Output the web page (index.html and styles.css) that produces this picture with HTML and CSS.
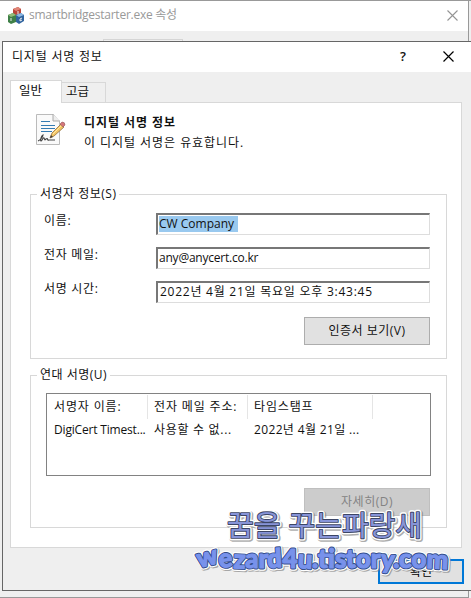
FILE: index.html
```html
<!DOCTYPE html>
<html lang="ko">
<head>
<meta charset="utf-8">
<title>디지털 서명 정보</title>
<link rel="stylesheet" href="styles.css">
</head>
<body>
<div class="desktop">
  <header class="parent-title">
    <svg class="app-icon" width="17" height="18" viewBox="0 0 17 18">
      <path d="M5 2l5-2 3 2v6l-5 2-3-2z" fill="#b8453a"/><path d="M5 2l5-2 3 2-5 2z" fill="#e08577"/>
      <path d="M0 8l5-2 3 2v7l-5 2-3-2z" fill="#3f8047"/><path d="M0 8l5-2 3 2-5 2z" fill="#94bd7c"/>
      <path d="M8 8l5-2 3 2v6l-5 3-3-2z" fill="#31649f"/><path d="M8 8l5-2 3 2-5 2z" fill="#8db7e2"/>
      <path d="M14 11l-2 1v2l2-1M10 4v3M3 11v3" fill="none" stroke="#eee"/>
    </svg>
    <span class="parent-name">smartbridgestarter.exe 속성</span>
    <svg class="parent-close" width="11" height="11" viewBox="0 0 11 11"><path d="M.5.5l10 10M10.5.5l-10 10" fill="none" stroke="#949494" stroke-width="1.1"/></svg>
  </header>
  <div class="parent-strip"><div class="parent-tab"></div></div>

  <main class="dialog">
    <header class="dialog-title">
      <span class="dialog-name">디지털 서명 정보</span>
      <span class="help">?</span>
      <svg class="close" width="11" height="11" viewBox="0 0 11 11"><path d="M.5.5l10 10M10.5.5l-10 10" fill="none" stroke="#000" stroke-width="1.2"/></svg>
    </header>
    <div class="tabs"><div class="tab active"><span>일반</span></div><div class="tab"><span>고급</span></div></div>
    <section class="panel">
      <div class="intro">
        <svg width="31" height="33" viewBox="0 0 31 33">
          <path d="M1.5 1.5h17l6 7v23h-23z" fill="#fafafa" stroke="#bbb"/>
          <path d="M18 1v7h7" fill="#eee" stroke="#aaa"/>
          <path d="M6 8.5h9M6 12.5h14M6 15.5h14M6 18.5h11" stroke="#347bb2" stroke-width="1.2"/>
          <path d="M3 28c3-1 5-5 5-6-2 1-3 6-2 6s2-4 3-3 0 3 2 1c2-2 1 2 3 1h6" fill="none" stroke="#444" stroke-width="1.1"/>
          <path d="M15 25l2-5 9-9 3 3-10 9z" fill="#f4c565" stroke="#8f7041" stroke-width=".8"/>
          <path d="M18 21l9-9" stroke="#ffe9a5"/>
          <path d="M25 11l2-2q3 0 3 3l-2 2z" fill="#d4777b" stroke="#95595d" stroke-width=".6"/>
          <path d="M15 25l1-3 2 2z" fill="#443d35"/>
        </svg>
        <div><h1>디지털 서명 정보</h1><p>이 디지털 서명은 유효합니다.</p></div>
      </div>

      <fieldset class="signer">
        <legend class="l-signer">서명자 정보(S)</legend>
        <div class="fields">
          <label>이름:</label><div class="field"><span class="selected">CW Company</span></div>
          <label>전자 메일:</label><div class="field"><span class="mail">any@anycert.co.kr</span></div>
          <label>서명 시간:</label><div class="field"><span class="time">2022년 4월 21일 목요일 오후 3:43:45</span></div>
        </div>
        <div class="button"><span class="b-view">인증서 보기(V)</span></div>
      </fieldset>

      <fieldset class="counter">
        <legend class="l-counter">연대 서명(U)</legend>
        <div class="list">
          <div class="col"><b>서명자 이름:</b><span class="c-digi">DigiCert Timest...</span></div>
          <div class="col"><b>전자 메일 주소:</b><span class="c-na">사용할 수 없...</span></div>
          <div class="col"><b>타임스탬프</b><span class="c-date">2022년 4월 21일 ...</span></div>
        </div>
        <div class="button disabled"><span class="b-detail">자세히(D)</span></div>
      </fieldset>
    </section>
    <div class="footer"><div class="ok"><span>확인</span></div></div>
  </main>
  <div class="parent-bottom"></div>
</div>

<svg class="watermark" width="270" height="80" viewBox="190 505 270 80">
  <defs>
    <text id="wm-name" class="wm-name" x="227" y="536" textLength="195" lengthAdjust="spacingAndGlyphs">꿈을 꾸는파랑새</text>
    <text id="wm-url" class="wm-url" x="199" y="568" textLength="249" lengthAdjust="spacingAndGlyphs" rotate="-14 -7 3 0 0 -4 0 3 0 0 3 0 -3 0 0 4 0 -3 0 3">wezard4u.tistory.com</text>
  </defs>
  <g class="shadow"><use href="#wm-name" x="1" y="1"/><use href="#wm-url" x="1" y="1"/></g>
  <g class="halo"><use href="#wm-name"/></g>
  <g class="url-halo"><use href="#wm-url"/></g>
  <g class="outline"><use href="#wm-name"/></g>
  <g class="fill"><use href="#wm-name"/></g>
  <g class="url-outline"><use href="#wm-url"/></g>
  <g class="url-fill"><use href="#wm-url"/></g>
</svg>
</body>
</html>
```
FILE: styles.css
```css
* { box-sizing: border-box; }
body {
  margin: 0;
  font: 400 12px/16px "Open Sans", "Noto Sans CJK KR", sans-serif;
  color: #111;
  overflow: hidden;
}
svg { display: block; }
span, b, label, legend, h1, p { white-space: nowrap; }
.desktop { width: 471px; height: 598px; background: #efefef; border-top: 1px solid #999; }
.parent-title {
  width: 469px; height: 30px; background: #fff; border-right: 1px solid #999;
  display: flex; align-items: flex-start; padding: 6px 10px 0 8px;
}
.parent-name { margin-left: 4px; font-size: 12px; color: #999; letter-spacing: -0.25px; }
.parent-close { margin: 3px 0 0 auto; }
.parent-strip { height: 10px; width: 469px; border-right: 1px solid #999; padding: 8px 0 0 103px; }
.parent-tab { width: 80px; height: 2px; border: 1px solid #d5d5d5; border-bottom: 0; }
.dialog { margin-left: 2px; height: 550px; border: solid #666; border-width: 1px 0 1px 1px; }
.dialog-title { height: 30px; background: #fff; display: flex; padding: 6px 17px 0 9px; }
.dialog-name { letter-spacing: 0.8px; padding-top: 1px; }
.help { margin-left: auto; font-weight: 600; font-size: 13px; }
.close { margin: 3px 0 0 37px; }
.tabs { display: flex; align-items: flex-end; height: 30px; padding-left: 7px; position: relative; }
.tab { width: 44px; height: 20px; border: solid #d8d8d8; border-width: 1px 1px 0 0; padding: 1px 0 0 4px; font-size: 12.5px; }
.tab.active { width: 52px; height: 23px; background: #fff; border-left-width: 1px; padding: 2px 0 0 8px; margin-bottom: -1px; }
.tab span { display: block; }
.panel { margin-left: 7px; width: 452px; height: 446px; border: 1px solid #d8d8d8; background: #fff; padding: 10px 14px 19px 19px; }
.intro { display: flex; height: 73px; padding-left: 5px; }
.intro > div { margin-left: 18px; }
h1 { font-size: 12px; line-height: 18px; margin: 1px 0 3px; font-weight: 600; letter-spacing: 0.95px; }
p { margin: 0; letter-spacing: 0.95px; }
fieldset { margin: 0; border: 1px solid #d8d8d8; width: 417px; min-width: 0; padding: 0; }
legend { margin-left: 6px; padding: 0 3px; line-height: 16px; letter-spacing: 0.5px; }
.signer { height: 173px; }
.counter { height: 161px; margin-top: 8px; }
.fields { display: grid; grid-template-columns: 112px 274px; grid-template-rows: 22px 22px 22px; row-gap: 12px; padding: 11px 0 0 13px; }
.fields label { line-height: 15px; letter-spacing: 0.7px; }
.field { height: 22px; border: 1px solid #ddd; border-top: 2px solid #777; border-left: 2px solid #777; padding: 1px 0 0 1px; }
.field span { display: inline-block; line-height: 16px; }
.field .selected { background: #99c9ef; padding-right: 4px; }
.mail { letter-spacing: -0.22px; }
.time { letter-spacing: 0.75px; padding-left: 1px; }
.button { width: 126px; height: 28px; border: 1px solid #adadad; background: #e1e1e1; margin: 14px 0 0 273px; text-align: center; line-height: 26px; letter-spacing: 0.5px; }
.list { width: 385px; height: 83px; border: 1px solid #828282; margin: 10px 0 0 15px; display: flex; padding-top: 1px; }
.col { width: 100px; height: 24px; border-right: 1px solid #e5e5e5; padding: 2px 0 0 6px; }
.col:first-child { width: 101px; padding-left: 7px; }
.col:nth-child(3) { width: 125px; }
.col b, .col span { display: block; font-weight: inherit; line-height: 20px; }
.col b { letter-spacing: 0.85px; }
.col span { margin-top: 3px; }
.col .c-digi { letter-spacing: -0.18px; }
.c-na { letter-spacing: 0.7px; }
.c-date { letter-spacing: 0.35px; }
.disabled { background: #ccc; border-color: #bfbfbf; color: #838383; margin-top: 12px; letter-spacing: 0.5px; }
.footer { padding: 11px 0 0 375px; }
.ok { width: 86px; height: 25px; border: 2px solid #0078d7; background: #e1e1e1; text-align: center; line-height: 21px; color: #000; }
.parent-bottom { height: 7px; width: 469px; border: solid #999; border-width: 0 1px 1px 0; }
.watermark { position: absolute; left: 190px; top: 505px; }
.wm-name { font: 400 28px "Noto Sans CJK KR", sans-serif; }
.wm-url { font: 900 26px Lato, sans-serif; }
.watermark g { stroke-linejoin: round; stroke-linecap: round; }
.shadow { fill: #777; stroke: #777; stroke-width: 5.5; opacity: .6; }
.halo { fill: #fff; stroke: #fff; stroke-width: 4.6; }
.url-halo { fill: #fff; stroke: #fff; stroke-width: 5.4; }
.outline { fill: #3c4565; stroke: #3c4565; stroke-width: 1.8; }
.fill { fill: #8794d8; }
.url-outline { fill: #344c86; stroke: #344c86; stroke-width: 3; }
.url-fill { fill: #7892eb; stroke: #7892eb; stroke-width: 1.2; }
```
